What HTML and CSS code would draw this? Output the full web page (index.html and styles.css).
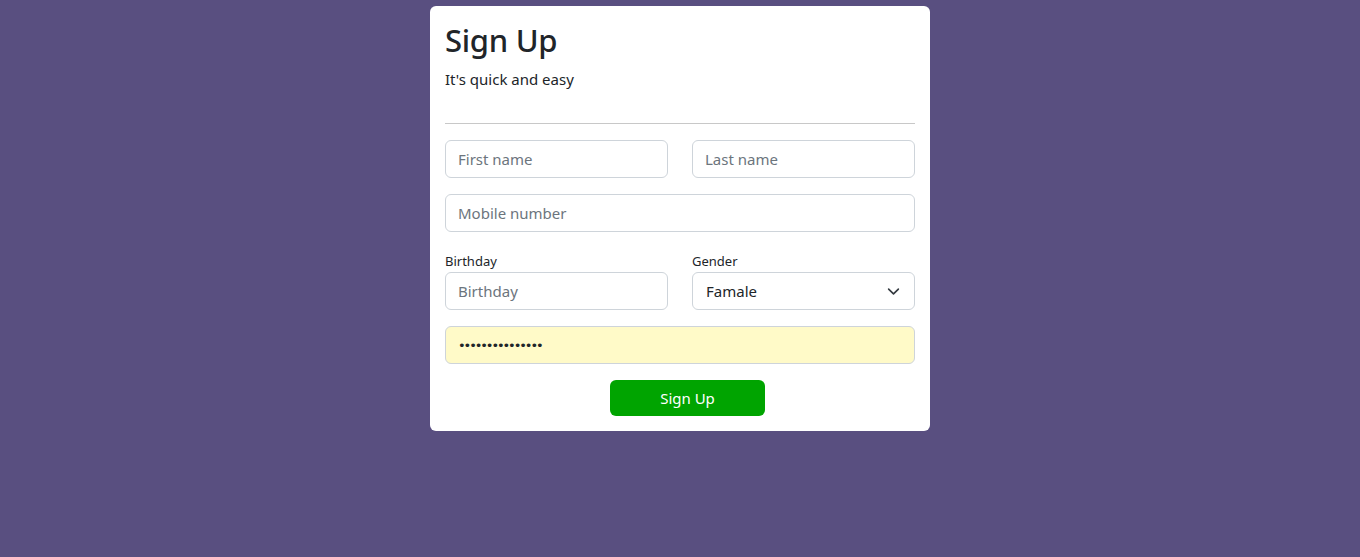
FILE: index.html
```html
<!DOCTYPE html>
<html lang="en">
<head>
<meta charset="utf-8">
<title>Sign Up</title>
<link rel="stylesheet" href="styles.css">
</head>
<body>
<div class="card">
  <h1 class="title">Sign Up</h1>
  <p class="subtitle">It's quick and easy</p>
  <hr class="divider">
  <form class="form">
    <div class="row">
      <input class="field" type="text" placeholder="First name">
      <input class="field" type="text" placeholder="Last name">
    </div>
    <div class="row single">
      <input class="field" type="text" placeholder="Mobile number">
    </div>
    <div class="row">
      <div class="group">
        <label class="label">Birthday</label>
        <input class="field" type="text" placeholder="Birthday">
      </div>
      <div class="group">
        <label class="label">Gender</label>
        <div class="select">
          <span class="select-value">Famale</span>
          <svg class="chevron" width="16" height="16" viewBox="0 0 16 16"><path d="M2 5l6 6 6-6" fill="none" stroke="#343a40" stroke-width="2" stroke-linecap="round" stroke-linejoin="round"/></svg>
        </div>
      </div>
    </div>
    <div class="row single">
      <div class="field password">•••••••••••••••</div>
    </div>
    <div class="actions">
      <button class="btn" type="button">Sign Up</button>
    </div>
  </form>
</div>
</body>
</html>
```
FILE: styles.css
```css
* { box-sizing: border-box; }
html, body { margin: 0; padding: 0; }
body {
  background: #594f80;
  font-family: "Noto Sans", "DejaVu Sans", sans-serif;
  color: #212529;
  height: 557px;
  display: flex;
  justify-content: center;
  align-items: flex-start;
}
.card {
  margin-top: 6px;
  width: 500px;
  background: #fff;
  border-radius: 6px;
  padding: 15px 15px 15px;
}
.title {
  margin: 0 0 8px;
  font-size: 31px;
  font-weight: 500;
  line-height: 38px;
  letter-spacing: -0.3px;
}
.subtitle {
  margin: 0;
  font-size: 15px;
  line-height: 24px;
}
.divider {
  margin: 32px 0 16px;
  border: 0;
  border-top: 1px solid #c8c8c8;
  height: 0;
}
.form { display: flex; flex-direction: column; gap: 16px; }
.row { display: grid; grid-template-columns: 1fr 1fr; column-gap: 24px; }
.row.single { grid-template-columns: 1fr; }
.group { display: flex; flex-direction: column; }
.label {
  font-size: 13px;
  line-height: 21px;
  margin-top: 3px;
  margin-bottom: 0;
}
.field {
  height: 38px;
  width: 100%;
  border: 1px solid #ced4da;
  border-radius: 6px;
  padding: 0 12px;
  font-family: inherit;
  font-size: 15px;
  color: #212529;
  background: #fff;
  outline: none;
}
.field::placeholder { color: #6c757d; opacity: 1; }
.select {
  height: 38px;
  border: 1px solid #ced4da;
  border-radius: 6px;
  padding: 0 14px 0 13px;
  display: flex;
  align-items: center;
  justify-content: space-between;
  font-size: 15px;
}
.chevron { width: 13px; height: 13px; }
.password {
  background: #fffac8;
  display: flex;
  align-items: center;
  font-family: "DejaVu Sans", sans-serif;
  font-size: 13px;
  letter-spacing: -2.1px;
  color: #212529;
}
.actions { display: flex; justify-content: center; padding-left: 15px; }
.btn {
  width: 155px;
  height: 36px;
  background: #00a400;
  color: #fff;
  border: 0;
  border-radius: 6px;
  font-family: inherit;
  font-size: 15px;
}
```
